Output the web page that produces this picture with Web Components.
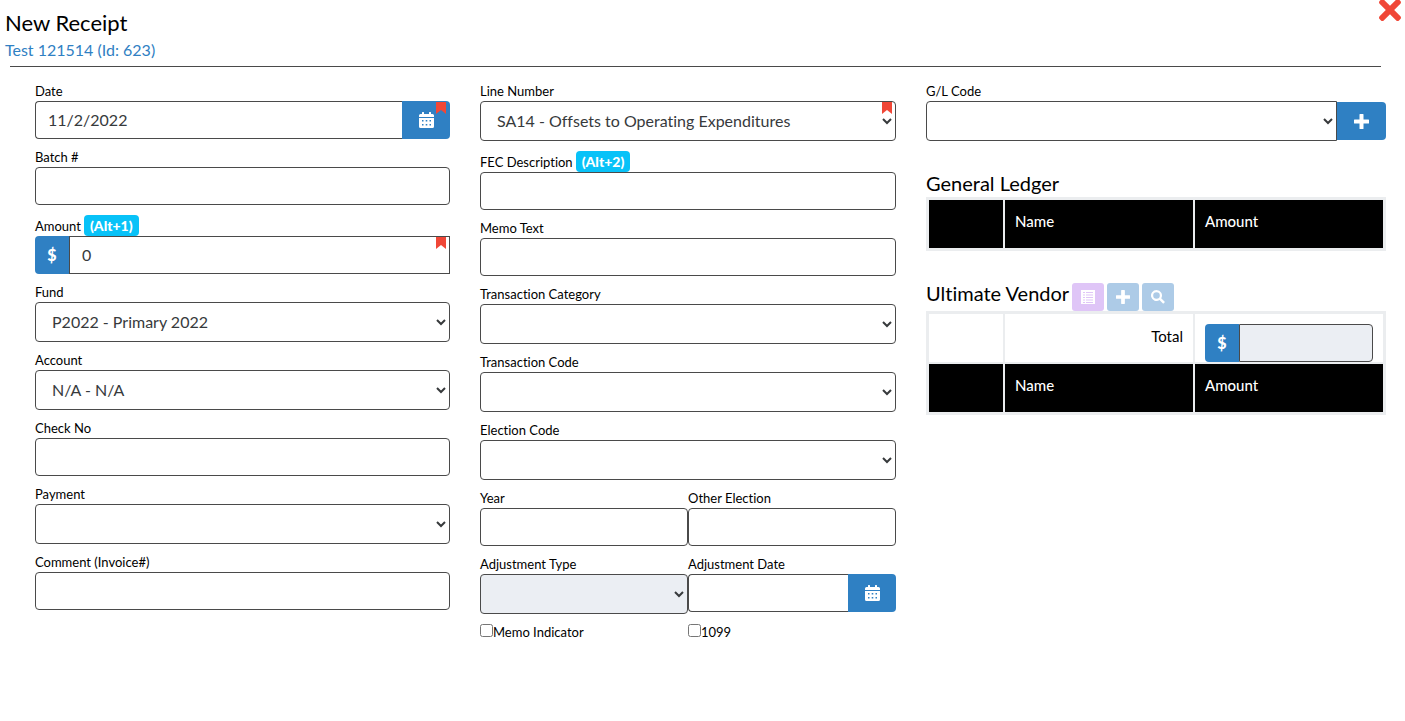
<!DOCTYPE html>
<html lang="en">
<head>
<meta charset="utf-8">
<title>New Receipt</title>
<style>
    body {
        margin: 0;
        background: #fff;
        color: #000;
        font-family: Lato, "Liberation Sans", sans-serif;
        font-size: 15px;
        font-variant-ligatures: none;
        --rc-primary: #2f80c3;
        --rc-danger: #f04737;
        --rc-info: #08c2f8;
        --rc-line: #4a4a4a;
        --rc-grid: #ebedef;
        --rc-disabled: #ebeef3;
    }
</style>
</head>
<body>

<receipt-page></receipt-page>

<template id="rc-icon-template">
    <style>
        :host { display: inline-flex; }
        svg { display: block; fill: currentColor; }
    </style>
    <svg aria-hidden="true"></svg>
</template>

<template id="rc-button-template">
    <style>
        :host { display: flex; }
        button {
            display: flex;
            align-items: center;
            justify-content: center;
            width: 48px;
            height: 38px;
            padding: 0;
            border: none;
            border-radius: 4px;
            background: var(--rc-primary);
            color: #fff;
            cursor: pointer;
        }
        :host([wide]) button { width: 49px; }
        :host([joined]) button { border-radius: 0 4px 4px 0; }
        :host([small]) button {
            width: 32px;
            height: 28px;
            border-radius: 3px;
            background: #adcbe7;
        }
        :host([tone="purple"]) button { background: #dfc5f7; }
    </style>
    <button type="button"><slot></slot></button>
</template>

<template id="rc-badge-template">
    <style>
        :host {
            display: inline-block;
            padding: 0 6px;
            border-radius: 4px;
            background: var(--rc-info);
            color: #fff;
            font-size: 14px;
            font-weight: 900;
            line-height: 21px;
        }
    </style>
    <slot></slot>
</template>

<template id="rc-field-template">
    <style>
        :host { display: block; margin-top: 8px; }
        :host([bare]) { margin: 0; }
        .caption {
            display: flex;
            align-items: flex-end;
            gap: 3px;
            font-size: 13px;
            line-height: 20px;
        }
        :host([hotkey]) .caption { min-height: 23px; }
        :host([bare]) .caption { display: none; }
        .group { position: relative; display: flex; align-items: center; }
        input, select {
            flex: 1;
            min-width: 0;
            width: 100%;
            height: 38px;
            box-sizing: border-box;
            margin: 0;
            padding: 6px 12px 8px;
            border: 1px solid var(--rc-line);
            border-radius: 4px;
            background: #fff;
            color: #373a3c;
            font-family: inherit;
            font-size: 16px;
            font-variant-ligatures: none;
            opacity: 1;
        }
        select { height: 40px; }
        input:disabled, select:disabled { background: var(--rc-disabled); }
        .money {
            width: 34px;
            height: 38px;
            border-radius: 4px 0 0 4px;
            background: var(--rc-primary);
            color: #fff;
            font-size: 16px;
            font-weight: 900;
            line-height: 38px;
            text-align: center;
        }
        .money + input { border-radius: 0 4px 4px 0; }
        :host([required]) .money + input { border-radius: 0; }
        :host([type="date"]) input,
        :host([type="lookup"]) select { border-radius: 4px 0 0 4px; }
        :host([type="date"]) input { border-right: none; }
        .flag { position: absolute; top: 1px; right: 4px; color: var(--rc-danger); }
    </style>
    <div class="caption"><label for="control"></label><slot name="badge"></slot></div>
    <div class="group"></div>
</template>

<template id="rc-check-template">
    <style>
        :host { display: flex; align-items: center; margin-top: 8px; font-size: 13px; line-height: 20px; }
        input { width: 13px; height: 13px; margin: 0 0 4px; }
    </style>
    <input type="checkbox" id="control"><label for="control"><slot></slot></label>
</template>

<template id="rc-grid-template">
    <style>
        :host { display: block; }
        table {
            width: 100%;
            table-layout: fixed;
            border: 1px solid var(--rc-grid);
            border-collapse: separate;
            border-spacing: 2px;
            background: var(--rc-grid);
            font-size: 15px;
            line-height: 24px;
        }
        .tools { width: 74px; }
        th, td {
            height: 48px;
            box-sizing: border-box;
            padding: 10px 10px 0;
            vertical-align: top;
            text-align: left;
        }
        th { padding-top: 9px; background: #000; color: #fff; font-weight: 500; }
        td { background: #fff; }
        .sum { text-align: right; }
    </style>
    <table>
        <colgroup><col class="tools"><col><col></colgroup>
        <tbody>
            <tr><th></th><th scope="col">Name</th><th scope="col">Amount</th></tr>
        </tbody>
    </table>
</template>

<template id="receipt-page-template">
    <style>
        :host { display: block; }
        header { display: flex; justify-content: space-between; align-items: flex-start; padding: 0 4px 0 5px; }
        h1 { margin: 10px 0 2px; font-size: 22px; font-weight: 400; line-height: 26px; }
        header a { display: block; color: var(--rc-primary); font-size: 16px; line-height: 24px; text-decoration: none; }
        .close {
            display: flex;
            align-items: center;
            height: 20px;
            padding: 0;
            border: none;
            background: none;
            color: var(--rc-danger);
            cursor: pointer;
        }
        hr { height: 1px; margin: 4px 24px 0 10px; border: none; background: var(--rc-line); }
        form {
            display: grid;
            grid-template-columns: 415fr 416fr 460fr;
            gap: 30px;
            align-items: start;
            padding: 6px 19px 24px 35px;
        }
        .pair { display: grid; grid-template-columns: 1fr 1fr; align-items: start; }
        section { margin-top: 30px; }
        section + section { margin-top: 32px; }
        .heading { display: flex; align-items: flex-start; gap: 3px; }
        h2 { margin: 0 0 2px; font-size: 20px; font-weight: 400; line-height: 24px; }
        .heading h2 { line-height: 20px; }
    </style>
    <header>
        <div>
            <h1>New Receipt</h1>
            <a href="#">Test 121514 (Id: 623)</a>
        </div>
        <button class="close" type="button" aria-label="Close"><rc-icon name="times" size="22"></rc-icon></button>
    </header>
    <hr>
    <form>
        <div>
            <rc-field type="date" label="Date" value="11/2/2022" required></rc-field>
            <rc-field label="Batch #"></rc-field>
            <rc-field type="money" label="Amount" value="0" required hotkey><rc-badge slot="badge">(Alt+1)</rc-badge></rc-field>
            <rc-field type="select" label="Fund" value="P2022 - Primary 2022"></rc-field>
            <rc-field type="select" label="Account" value="N/A - N/A"></rc-field>
            <rc-field label="Check No"></rc-field>
            <rc-field type="select" label="Payment"></rc-field>
            <rc-field label="Comment (Invoice#)"></rc-field>
        </div>
        <div>
            <rc-field type="select" label="Line Number" value="SA14 - Offsets to Operating Expenditures" required></rc-field>
            <rc-field label="FEC Description" hotkey><rc-badge slot="badge">(Alt+2)</rc-badge></rc-field>
            <rc-field label="Memo Text"></rc-field>
            <rc-field type="select" label="Transaction Category"></rc-field>
            <rc-field type="select" label="Transaction Code"></rc-field>
            <rc-field type="select" label="Election Code"></rc-field>
            <div class="pair">
                <rc-field label="Year"></rc-field>
                <rc-field label="Other Election"></rc-field>
            </div>
            <div class="pair">
                <rc-field type="select" label="Adjustment Type" disabled></rc-field>
                <rc-field type="date" label="Adjustment Date"></rc-field>
            </div>
            <div class="pair">
                <rc-check>Memo Indicator</rc-check>
                <rc-check>1099</rc-check>
            </div>
        </div>
        <div>
            <rc-field type="lookup" label="G/L Code"></rc-field>
            <section>
                <h2>General Ledger</h2>
                <rc-grid></rc-grid>
            </section>
            <section>
                <div class="heading">
                    <h2>Ultimate Vendor</h2>
                    <rc-button small tone="purple" label="List"><rc-icon name="list" size="14"></rc-icon></rc-button>
                    <rc-button small label="Add"><rc-icon name="plus" size="14"></rc-icon></rc-button>
                    <rc-button small label="Search"><rc-icon name="search" size="14"></rc-icon></rc-button>
                </div>
                <rc-grid total></rc-grid>
            </section>
        </div>
    </form>
</template>

<script>
    (() => {

        const icons = {
            times: ["0 80 352 352", "M242.72 256l100.07-100.07c12.28-12.28 12.28-32.19 0-44.48l-22.24-22.24c-12.28-12.28-32.19-12.28-44.48 0L176 189.28 75.93 89.21c-12.28-12.28-32.19-12.28-44.48 0L9.21 111.45c-12.28 12.28-12.28 32.19 0 44.48L109.28 256 9.21 356.07c-12.28 12.28-12.28 32.19 0 44.48l22.24 22.24c12.28 12.28 32.2 12.28 44.48 0L176 322.72l100.07 100.07c12.28 12.28 32.2 12.28 44.48 0l22.24-22.24c12.28-12.28 12.28-32.19 0-44.48L242.72 256z"],
            calendar: ["0 0 15 16", "M0 5V3.500Q0 2 1.500 2H3V0.500Q3 0 3.500 0H4.500Q5 0 5 0.500V2H10V0.500Q10 0 10.500 0H11.500Q12 0 12 0.500V2H13.500Q15 2 15 3.500V5ZM0 6H15V14.500Q15 16 13.500 16H1.500Q0 16 0 14.500ZM3 8V9.500H4.500V8ZM6.700 8V9.500H8.300V8ZM10.500 8V9.500H12V8ZM3 12V13.500H4.500V12ZM6.700 12V13.500H8.300V12ZM10.500 12V13.500H12V12Z"],
            plus: ["0 0 15 15", "M5.500 0.500Q5.500 0 6 0H9Q9.500 0 9.500 0.500V5.500H14.500Q15 5.500 15 6V9Q15 9.500 14.500 9.500H9.500V14.500Q9.500 15 9 15H6Q5.500 15 5.500 14.500V9.500H0.500Q0 9.500 0 9V6Q0 5.500 0.500 5.500H5.500Z"],
            search: ["0 0 14 14", "M5.500 0a5.500 5.500 0 1 0 3 10.100L12.200 13.800 14 12 10.200 8.300A5.500 5.500 0 0 0 5.500 0ZM5.500 2.200a3.300 3.300 0 1 1 0 6.600a3.300 3.300 0 1 1 0-6.600Z"],
            list: ["0 0 14 14", "M0 0H14V14H0ZM2 2V3H4V2ZM5 2V3H12V2ZM2 4.500V5.500H4V4.500ZM5 4.500V5.500H12V4.500ZM2 7V8H4V7ZM5 7V8H12V7ZM2 9.500V10.500H4V9.500ZM5 9.500V10.500H12V9.500ZM2 12V13H4V12ZM5 12V13H12V12Z"],
            bookmark: ["0 0 10 12", "M0 0H10V12L5 8L0 12Z"]
        };

        // attaches an open root filled from the element's template
        function fill(host, id) {
            const root = host.attachShadow({ mode: "open" });
            root.appendChild(document.getElementById(id).content.cloneNode(true));
            return root;
        }

        class RcIcon extends HTMLElement {
            connectedCallback() {
                if (this.shadowRoot) return;
                const svg = fill(this, "rc-icon-template").querySelector("svg");
                const [box, path] = icons[this.getAttribute("name")];
                svg.setAttribute("viewBox", box);
                svg.setAttribute("height", this.getAttribute("size") || 16);
                svg.innerHTML = `<path fill-rule="evenodd" d="${path}"/>`;
            }
        }

        class RcButton extends HTMLElement {
            connectedCallback() {
                if (this.shadowRoot) return;
                const root = fill(this, "rc-button-template");
                root.querySelector("button").setAttribute("aria-label", this.getAttribute("label"));
            }
        }

        class RcBadge extends HTMLElement {
            constructor() {
                super();
                fill(this, "rc-badge-template");
            }
        }

        class RcField extends HTMLElement {
            connectedCallback() {
                if (this.shadowRoot) return;
                const root = fill(this, "rc-field-template");
                const type = this.getAttribute("type");
                const value = this.getAttribute("value") || "";
                const off = this.hasAttribute("disabled") ? "disabled" : "";
                const input = `<input id="control" type="text" value="${value}" ${off}>`;
                const select = `<select id="control" ${off}><option>${value}</option></select>`;
                let html = input;

                if (type === "select") html = select;
                if (type === "lookup") html = select + `<rc-button joined wide label="Add code"><rc-icon name="plus" size="15"></rc-icon></rc-button>`;
                if (type === "date") html = input + `<rc-button joined label="Pick a date"><rc-icon name="calendar" size="16"></rc-icon></rc-button>`;
                if (type === "money") html = `<span class="money">$</span>` + input;
                if (this.hasAttribute("required")) html += `<rc-icon class="flag" name="bookmark" size="12"></rc-icon>`;

                root.querySelector("label").textContent = this.getAttribute("label");
                root.querySelector(".group").innerHTML = html;
                if (this.hasAttribute("bare")) {
                    root.querySelector("#control").setAttribute("aria-label", this.getAttribute("label"));
                    root.querySelector(".caption").remove();
                }
            }
        }

        class RcCheck extends HTMLElement {
            constructor() {
                super();
                fill(this, "rc-check-template");
            }
        }

        class RcGrid extends HTMLElement {
            connectedCallback() {
                if (this.shadowRoot) return;
                const root = fill(this, "rc-grid-template");
                if (this.hasAttribute("total")) {
                    root.querySelector("tbody").insertAdjacentHTML("afterbegin",
                        `<tr><td></td><td class="sum">Total</td><td><rc-field bare disabled type="money" label="Total"></rc-field></td></tr>`);
                }
            }
        }

        class ReceiptPage extends HTMLElement {
            constructor() {
                super();
                fill(this, "receipt-page-template");
            }
        }

        customElements.define("rc-icon", RcIcon);
        customElements.define("rc-button", RcButton);
        customElements.define("rc-badge", RcBadge);
        customElements.define("rc-field", RcField);
        customElements.define("rc-check", RcCheck);
        customElements.define("rc-grid", RcGrid);
        customElements.define("receipt-page", ReceiptPage);
    })();
</script>
</body>
</html>
